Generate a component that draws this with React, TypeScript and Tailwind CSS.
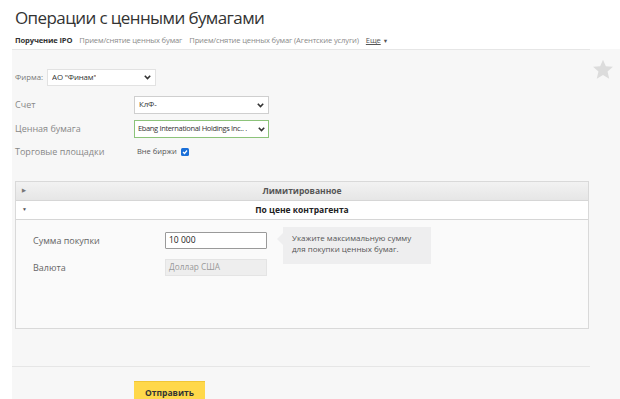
import React from "react";

const Chevron = () => (
  <svg width="7" height="5" viewBox="0 0 7 5" className="shrink-0">
    <path d="M0.8 0.8 L3.5 3.6 L6.2 0.8" fill="none" stroke="#333" strokeWidth="1.6" />
  </svg>
);

type SelectProps = { value: string; className?: string; textClass?: string };

const FakeSelect = ({ value, className, textClass }: SelectProps) => (
  <div
    className={
      "flex items-center justify-between gap-[1px] bg-white border text-[#333] " + (className ?? "")
    }
  >
    <span className={"whitespace-nowrap overflow-hidden " + (textClass ?? "text-[7.9px] tracking-[-0.15px]")}>
      {value}
    </span>
    <Chevron />
  </div>
);

const Star = () => (
  <svg width="22" height="21" viewBox="0 0 24 23">
    <path
      d="M12 0.8 L15.1 8 L22.9 8.6 L17 13.8 L18.8 21.6 L12 17.5 L5.2 21.6 L7 13.8 L1.1 8.6 L8.9 8 Z"
      fill="#dcdcdc"
    />
  </svg>
);

export default function App() {
  return (
    <div className="w-[620px] h-[399px] overflow-hidden bg-white font-['Open_Sans',sans-serif] text-[#333]">
      <div className="pl-[15px] pt-[5px]">
        <h1 className="text-[17px] leading-[26px] tracking-[-0.6px] text-[#333]">Операции с ценными бумагами</h1>
      </div>

      {/* tabs */}
      <div className="flex items-center gap-[7px] pl-[15px] mt-[2px] h-[16px] text-[7.6px] tracking-[-0.15px]">
        <span className="font-bold text-[#333]">Поручение IPO</span>
        <span className="text-[#8a8a8a]">Прием/снятие ценных бумаг</span>
        <span className="text-[#8a8a8a]">Прием/снятие ценных бумаг (Агентские услуги)</span>
        <span className="flex items-center gap-[2px] text-[#555]">
          <span className="underline">Еще</span>
          <span className="text-[5.5px]">▼</span>
        </span>
      </div>

      <div className="ml-[12px] flex bg-[#f7f7f7] h-[360px]">
        <div className="w-[578px] border-t border-[#e6e6e6]">
          {/* firm */}
          <div className="flex items-center gap-[4px] pl-[3px] mt-[19px] text-[7.8px] text-[#777]">
            <span>Фирма:</span>
            <FakeSelect value={'АО "Финам"'} className="w-[109px] h-[17px] border-[#e2e2e2] px-[4px]" />
          </div>

          {/* fields */}
          <div className="flex flex-col mt-[10px] text-[9px] text-[#888]">
            <div className="flex items-center h-[18px]">
              <span className="w-[122px] pl-[3px]">Счет</span>
              <FakeSelect value="КлФ-" className="w-[135px] h-[18px] border-[#cfcfcf] px-[4px]" />
            </div>
            <div className="flex items-center h-[18px] mt-[6px]">
              <span className="w-[122px] pl-[3px]">Ценная бумага</span>
              <FakeSelect
                value="Ebang International Holdings Inc.. ."
                className="w-[135px] h-[18px] border-[#8cc37a] border-[1.5px] px-[3px]"
                textClass="text-[7.5px] tracking-[-0.35px]"
              />
            </div>
            <div className="flex items-center h-[18px] mt-[5px]">
              <span className="w-[125px] pl-[3px]">Торговые площадки</span>
              <span className="text-[7.5px] text-[#555]">Вне биржи</span>
              <span className="ml-[4px] w-[8px] h-[8px] rounded-[1.5px] bg-[#1a6fd8] flex items-center justify-center">
                <svg width="6" height="6" viewBox="0 0 6 6">
                  <path d="M1 3 L2.5 4.5 L5 1.5" fill="none" stroke="white" strokeWidth="1.2" />
                </svg>
              </span>
            </div>
          </div>

          {/* accordion */}
          <div className="mt-[20px] ml-[3px] w-[574px] border border-[#d9d9d9] text-[8.5px]">
            <div className="relative flex items-center justify-center h-[19px] bg-gradient-to-b from-[#f2f2f2] to-[#e6e6e6] border-b border-[#d6d6d6] font-bold text-[#555]">
              <span className="absolute left-[6px] text-[5px] text-[#777]">▶</span>
              Лимитированное
            </div>
            <div className="relative flex items-center justify-center h-[19px] bg-white border-b border-[#d6d6d6] font-bold text-[#222]">
              <span className="absolute left-[6px] text-[5px] text-[#555]">▼</span>
              По цене контрагента
            </div>
            <div className="bg-[#fafafa] h-[108px] pl-[17px] pt-[7px]">
              <div className="flex items-start">
                <div className="flex flex-col text-[9px] text-[#666]">
                  <div className="flex items-center h-[17px] mt-[5px]">
                    <span className="w-[132px]">Сумма покупки</span>
                    <div className="w-[102px] h-[17px] bg-white border border-[#9a9a9a] rounded-[1px] flex items-center px-[3px] text-[8.5px] text-[#222]">
                      10 000
                    </div>
                  </div>
                  <div className="flex items-center h-[17px] mt-[10px]">
                    <span className="w-[132px]">Валюта</span>
                    <div className="w-[102px] h-[17px] bg-[#eeeeee] border border-[#e4e4e4] flex items-center px-[3px] text-[8.3px] text-[#999]">
                      Доллар США
                    </div>
                  </div>
                </div>
                <div className="relative ml-[16px] w-[148px] h-[37px] bg-[#eeeeef] px-[9px] pt-[5px] text-[8px] leading-[11px] text-[#555]">
                  <span className="absolute left-[-6px] top-[6px] w-0 h-0 border-y-[6px] border-y-transparent border-r-[6px] border-r-[#eeeeef]" />
                  Укажите максимальную сумму для покупки ценных бумаг.
                </div>
              </div>
            </div>
          </div>

          <div className="mt-[37px] border-t border-[#e6e6e6]" />

          <div className="pl-[122px] mt-[11px]">
            <button className="w-[71px] h-[24px] bg-[#ffd84a] border-t border-[#f0c636] text-[8.5px] font-bold text-[#333]">
              Отправить
            </button>
          </div>
        </div>
        <div className="pl-[2px] pt-[10px]">
          <Star />
        </div>
      </div>
    </div>
  );
}
